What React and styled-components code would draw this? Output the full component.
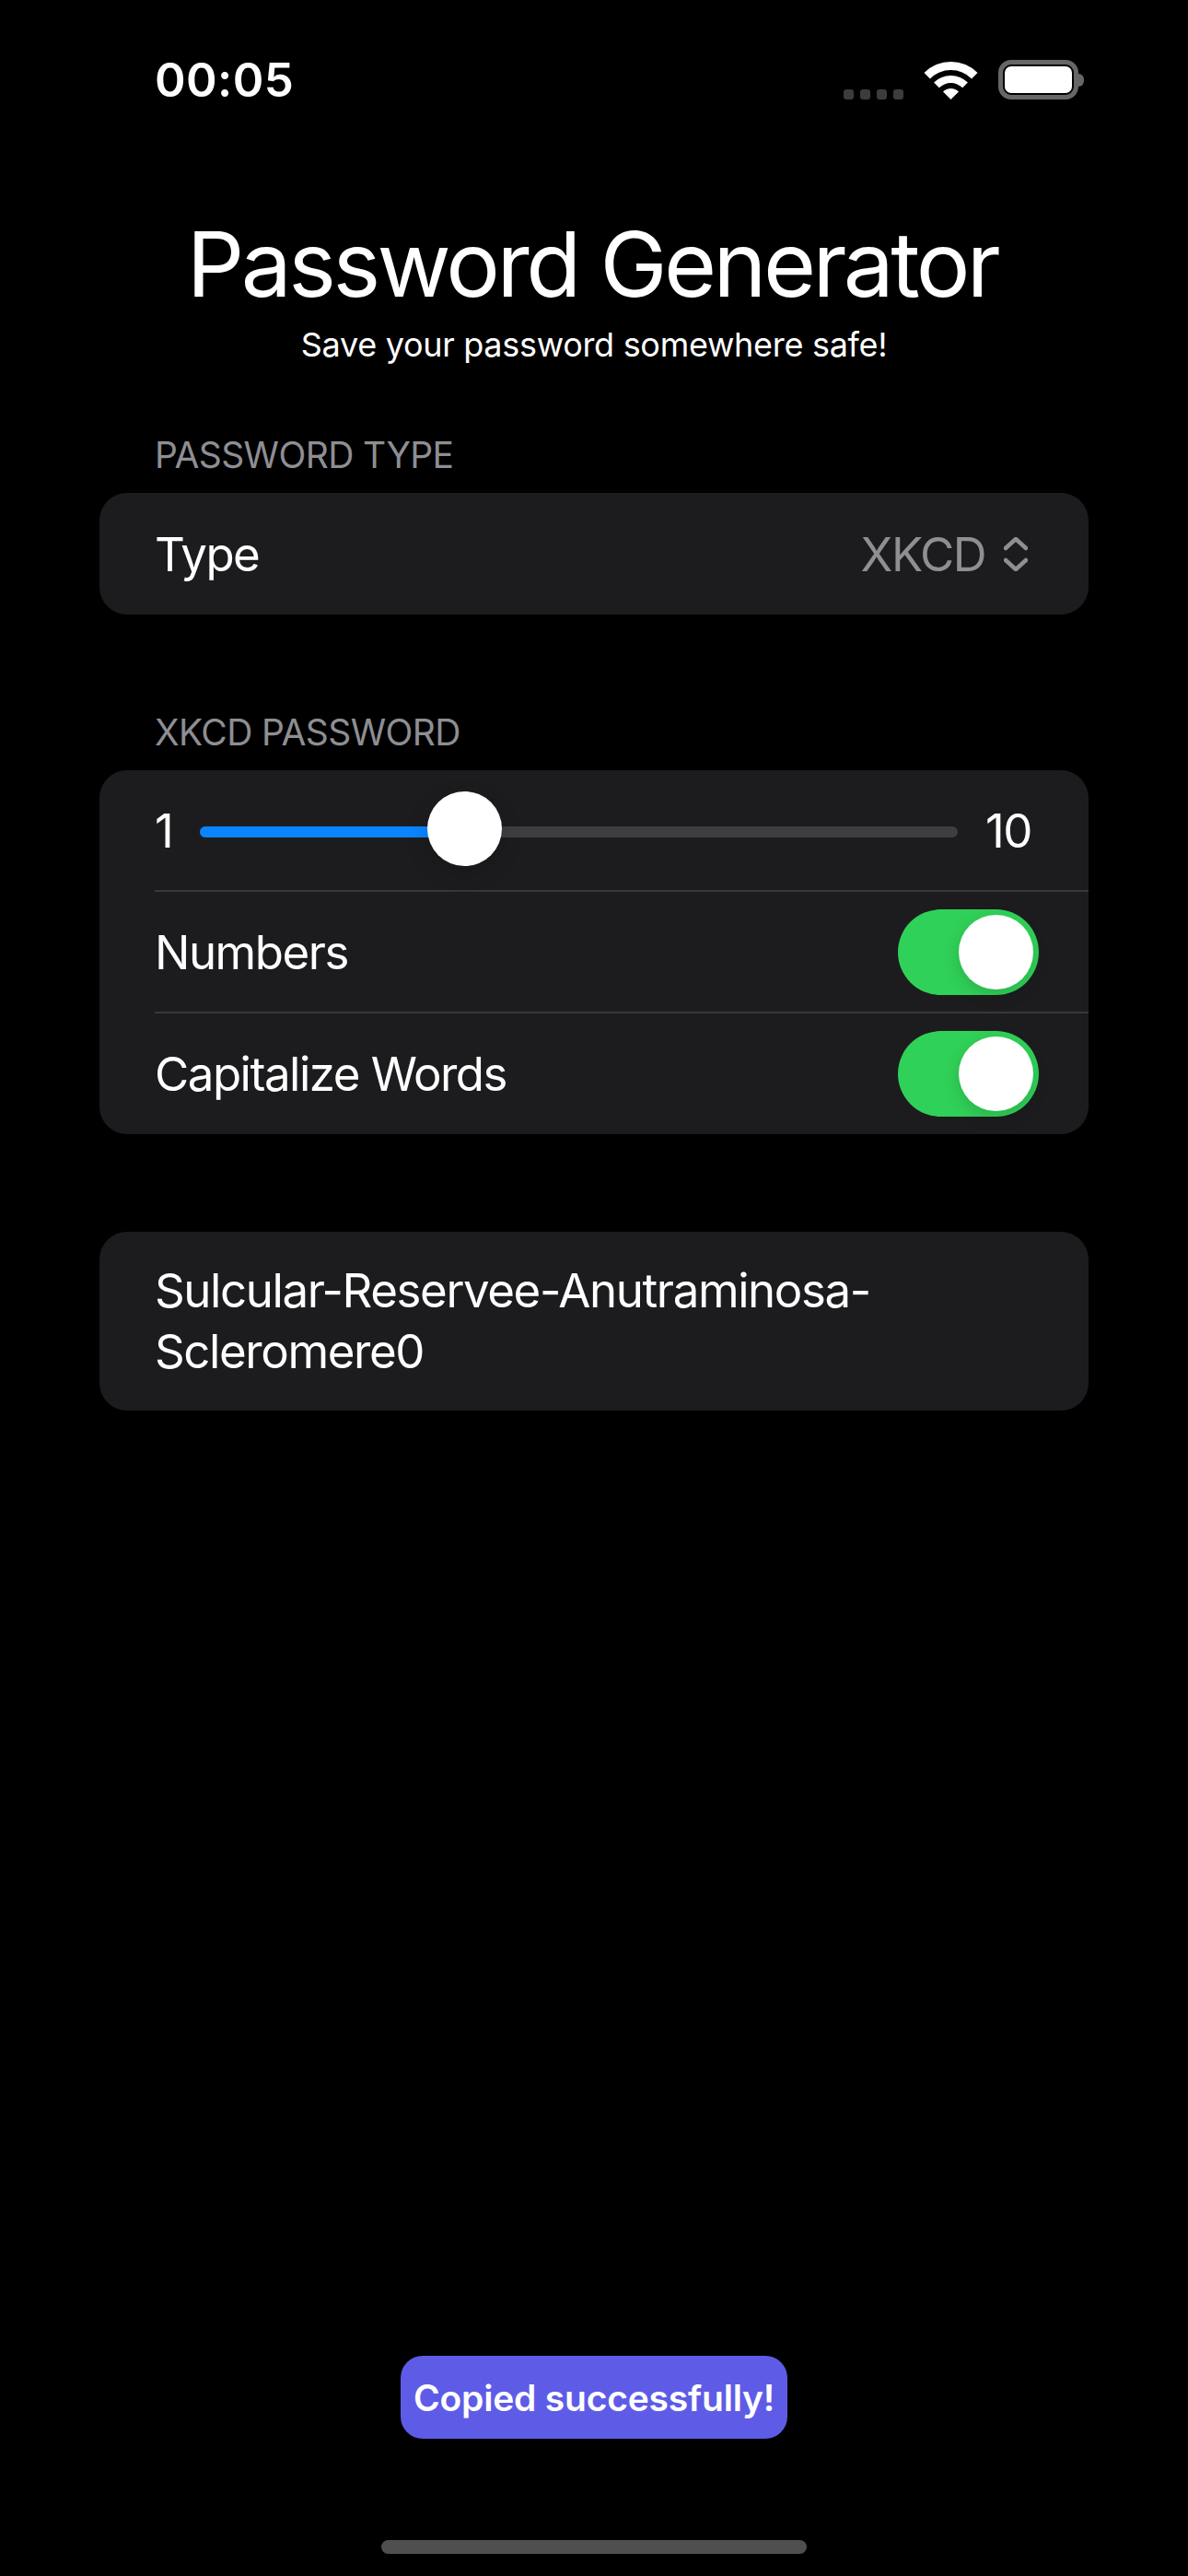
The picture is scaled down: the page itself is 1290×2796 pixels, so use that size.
import styled, { createGlobalStyle } from "styled-components"

const GlobalStyle = createGlobalStyle`
  html, body {
    margin: 0;
    padding: 0;
    background: #000;
  }
  * {
    box-sizing: border-box;
  }
`;

const Page = styled.div`
  width: 1290px;
  height: 2796px;
  background: #000;
  color: #fff;
  font-family: Inter, "Liberation Sans", sans-serif;
  display: flex;
  flex-direction: column;
  overflow: hidden;
`;

const StatusBar = styled.div`
  height: 108px;
  padding: 65px 113px 0 168px;
  display: flex;
  justify-content: space-between;
  align-items: center;
`;

const Time = styled.div`
  font-size: 51px;
  font-weight: 600;
  line-height: 44px;
  letter-spacing: 0.4px;
`;

const StatusIcons = styled.div`
  display: flex;
  align-items: flex-end;
`;

const SignalDots = styled.div`
  display: flex;
  gap: 7px;
  margin-right: 23px;
`;

const SignalDot = styled.span`
  width: 11px;
  height: 11px;
  border-radius: 3px;
  background: #3c3c3c;
`;

const Battery = styled.div`
  width: 87px;
  height: 43px;
  margin-left: 23px;
  border: 5px solid #666;
  border-radius: 14px;
  padding: 2px;
  background: #000;
  display: flex;

  &::before {
    content: "";
    flex: 1;
    background: #fff;
    border-radius: 7px;
  }
`;

const BatteryNub = styled.span`
  width: 6px;
  height: 14px;
  margin: 0 0 14px 0;
  background: #666;
  border-radius: 0 7px 7px 0;
`;

const Header = styled.header`
  margin-top: 113px;
  display: flex;
  flex-direction: column;
  align-items: center;
`;

const Title = styled.h1`
  margin: 0 4px 0 0;
  font-size: 98px;
  font-weight: 400;
  line-height: 131px;
  letter-spacing: -3.6px;
`;

const Subtitle = styled.div`
  font-size: 36px;
  line-height: 44px;
  letter-spacing: -0.3px;
`;

const Sections = styled.div`
  padding: 0 108px;
  display: flex;
  flex-direction: column;
`;

const SectionLabel = styled.div`
  margin: ${props => props.$top}px 0 18px 60px;
  font-size: 39px;
  line-height: 46px;
  letter-spacing: -0.6px;
  color: #8e8e93;
`;

const Card = styled.div`
  background: #1c1c1e;
  border-radius: 30px;
  margin-top: ${props => props.$top || 0}px;
  padding-bottom: ${props => props.$bottom || 0}px;
`;

const Row = styled.div`
  height: ${props => props.$height || 132}px;
  margin-left: 60px;
  padding-top: ${props => (props.$divider ? 1 : 0)}px;
  padding-right: ${props => props.$end || 54}px;
  display: flex;
  align-items: center;
  justify-content: space-between;
  font-size: 51px;
  letter-spacing: -1.5px;
  border-top: ${props => (props.$divider ? "2px solid #38383a" : "none")};
`;

const SelectValue = styled.div`
  display: flex;
  align-items: center;
  gap: 20px;
  color: #8e8e93;
  margin-right: 12px;
`;

const SliderTrack = styled.div`
  position: relative;
  width: 823px;
  height: 12px;
  margin-top: 4px;
  border-radius: 6px;
  background: #3e3e41;
`;

const SliderFill = styled.div`
  height: 100%;
  border-radius: 6px;
  background: #0a84ff;
`;

const SliderThumb = styled.div`
  position: absolute;
  top: -38px;
  width: 81px;
  height: 81px;
  border-radius: 50%;
  background: #fff;
  box-shadow: 0 8px 24px rgba(0, 0, 0, 0.15);
`;

const ToggleTrack = styled.div`
  width: 153px;
  height: 93px;
  padding: 6px;
  border-radius: 47px;
  background: #30d158;
  display: flex;
  justify-content: flex-end;
`;

const ToggleThumb = styled.div`
  width: 81px;
  height: 81px;
  border-radius: 50%;
  background: #fff;
  box-shadow: 0 6px 18px rgba(0, 0, 0, 0.15);
`;

const PasswordText = styled.div`
  padding: 31px 100px 31px 60px;
  font-size: 51px;
  line-height: 66px;
  letter-spacing: -1.4px;
`;

const Toast = styled.div`
  margin: auto auto 0;
  width: 420px;
  height: 90px;
  border-radius: 24px;
  background: #5e5ce6;
  display: flex;
  align-items: center;
  justify-content: center;
  font-size: 39px;
  font-weight: 600;
  letter-spacing: -0.2px;
  white-space: nowrap;
`;

const HomeIndicator = styled.div`
  margin: 110px auto 24px;
  width: 462px;
  height: 15px;
  border-radius: 8px;
  background: #4f4f4f;
`;

const Wifi = () => (
  <svg width="57" height="41" viewBox="0 0 57 41" style={{ overflow: "visible" }}>
    <path fill="#fff" d="M-0.5 12 A41 41 0 0 1 57.5 12 L51.1 18.4 A32 32 0 0 0 5.9 18.4 Z" />
    <path fill="#fff" d="M10.1 22.6 A26 26 0 0 1 46.9 22.6 L41.2 28.3 A18 18 0 0 0 15.8 28.3 Z" />
    <path fill="#fff" d="M20 32.5 A12 12 0 0 1 37 32.5 L28.5 41 Z" />
  </svg>
);

const UpDownChevron = () => (
  <svg width="26" height="37" viewBox="0 0 26 37" fill="none" stroke="#8e8e93" strokeWidth="4.5" strokeLinecap="round" strokeLinejoin="round">
    <path d="M2 12 L13 2 L24 12" />
    <path d="M2 25 L13 35 L24 25" />
  </svg>
);

const Toggle = () => (
  <ToggleTrack>
    <ToggleThumb />
  </ToggleTrack>
);

const LengthSlider = ({ value, min, max }) => {
  const travel = 823 - 81;
  const left = ((value - min) / (max - min)) * travel;
  return (
    <SliderTrack>
      <SliderFill style={{ width: left + 40 }} />
      <SliderThumb style={{ left }} />
    </SliderTrack>
  );
};

export default () => {
  return (
    <>
      <GlobalStyle />
      <Page>
        <StatusBar>
          <Time>00:05</Time>
          <StatusIcons>
            <SignalDots>
              {[0, 1, 2, 3].map(v => <SignalDot key={v} />)}
            </SignalDots>
            <Wifi />
            <Battery />
            <BatteryNub />
          </StatusIcons>
        </StatusBar>

        <Header>
          <Title>Password Generator</Title>
          <Subtitle>Save your password somewhere safe!</Subtitle>
        </Header>

        <Sections>
          <SectionLabel $top={75}>PASSWORD TYPE</SectionLabel>
          <Card>
            <Row>
              <span>Type</span>
              <SelectValue>
                XKCD
                <UpDownChevron />
              </SelectValue>
            </Row>
          </Card>

          <SectionLabel $top={105}>XKCD PASSWORD</SectionLabel>
          <Card $bottom={1}>
            <Row $end={62} $height={130}>
              <span>1</span>
              <LengthSlider value={4} min={1} max={10} />
              <span>10</span>
            </Row>
            <Row $divider>
              <span>Numbers</span>
              <Toggle />
            </Row>
            <Row $divider>
              <span>Capitalize Words</span>
              <Toggle />
            </Row>
          </Card>

          <Card $top={106}>
            <PasswordText>Sulcular-Reservee-Anutraminosa-Scleromere0</PasswordText>
          </Card>
        </Sections>

        <Toast>Copied successfully!</Toast>
        <HomeIndicator />
      </Page>
    </>
  )
}
